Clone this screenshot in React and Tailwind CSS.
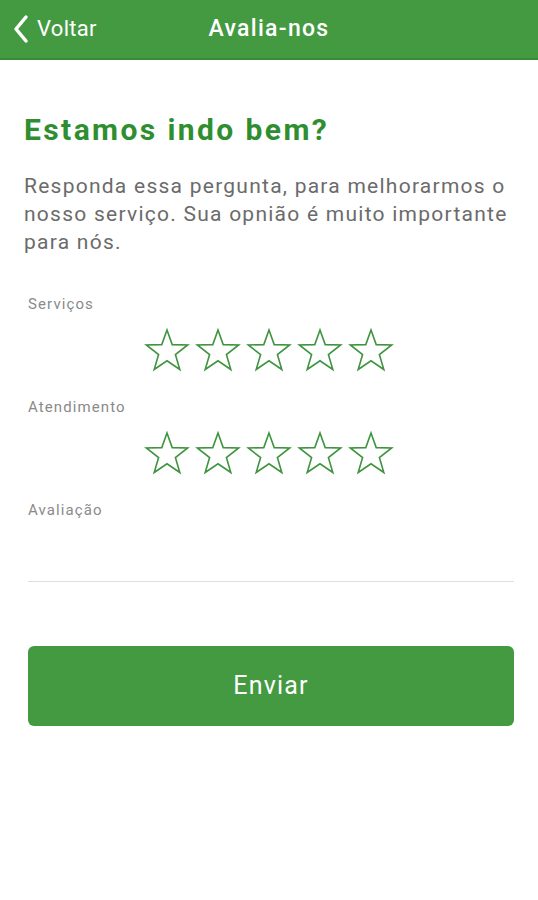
import React from "react";

function Star() {
    return (
        <svg width="46" height="44" viewBox="0 0 46 44" fill="none">
            <polygon
                points="23,2 28.2,16.6 43.7,17 31.4,26.6 35.8,41.5 23,32.8 10.2,41.5 14.6,26.6 2.3,17 17.8,16.6"
                stroke="#3f9440"
                strokeWidth="1.6"
                strokeLinejoin="miter"
            />
        </svg>
    );
}

function StarRow() {
    return (
        <div className="flex justify-center gap-[5px] pr-[4px]">
            {[0, 1, 2, 3, 4].map((i) => (
                <Star key={i} />
            ))}
        </div>
    );
}

export default function App() {
    return (
        <div className="w-[538px] h-[900px] bg-white font-['Roboto',sans-serif]">
            <header className="h-[60px] bg-[#439a41] border-b-2 border-[#3a8a38] flex items-center relative">
                <a href="#" className="flex items-center pl-[10px] text-white text-[22px] tracking-[0.3px] leading-none">
                    <svg width="22" height="30" viewBox="0 0 22 30" fill="none">
                        <path d="M16 3 L6 15 L16 27" stroke="white" strokeWidth="3.5" strokeLinecap="round" strokeLinejoin="round" />
                    </svg>
                    <span className="ml-[5px]">Voltar</span>
                </a>
                <h1 className="absolute left-0 right-0 text-center text-white text-[23px] tracking-[1.3px] font-medium pointer-events-none">Avalia-nos</h1>
            </header>

            <main className="px-[24px]">
                <h2 className="mt-[50px] text-[#2f8f30] text-[30px] tracking-[2.4px] font-bold leading-[40px] whitespace-nowrap">Estamos indo bem?</h2>
                <p className="mt-[22px] text-[#6b6b6b] text-[21px] tracking-[1.25px] leading-[28px] whitespace-nowrap">
                    Responda essa pergunta, para melhorarmos o<br />
                    nosso serviço. Sua opnião é muito importante<br />
                    para nós.
                </p>

                <div className="pl-[4px]">
                    <div className="mt-[38px] text-[15px] tracking-[1.1px] text-[#8a8a8a] leading-[20px]">Serviços</div>
                    <div className="mt-[14px]"><StarRow /></div>

                    <div className="mt-[25px] text-[15px] tracking-[1.1px] text-[#8a8a8a] leading-[20px]">Atendimento</div>
                    <div className="mt-[14px]"><StarRow /></div>

                    <div className="mt-[25px] text-[15px] tracking-[1.1px] text-[#8a8a8a] leading-[20px]">Avaliação</div>
                    <div className="mt-[61px] border-b border-[#dedede]"></div>

                    <button className="mt-[64px] w-full h-[80px] rounded-[6px] bg-[#439a41] text-white text-[25px] tracking-[1.2px]">Enviar</button>
                </div>
            </main>
        </div>
    );
}
